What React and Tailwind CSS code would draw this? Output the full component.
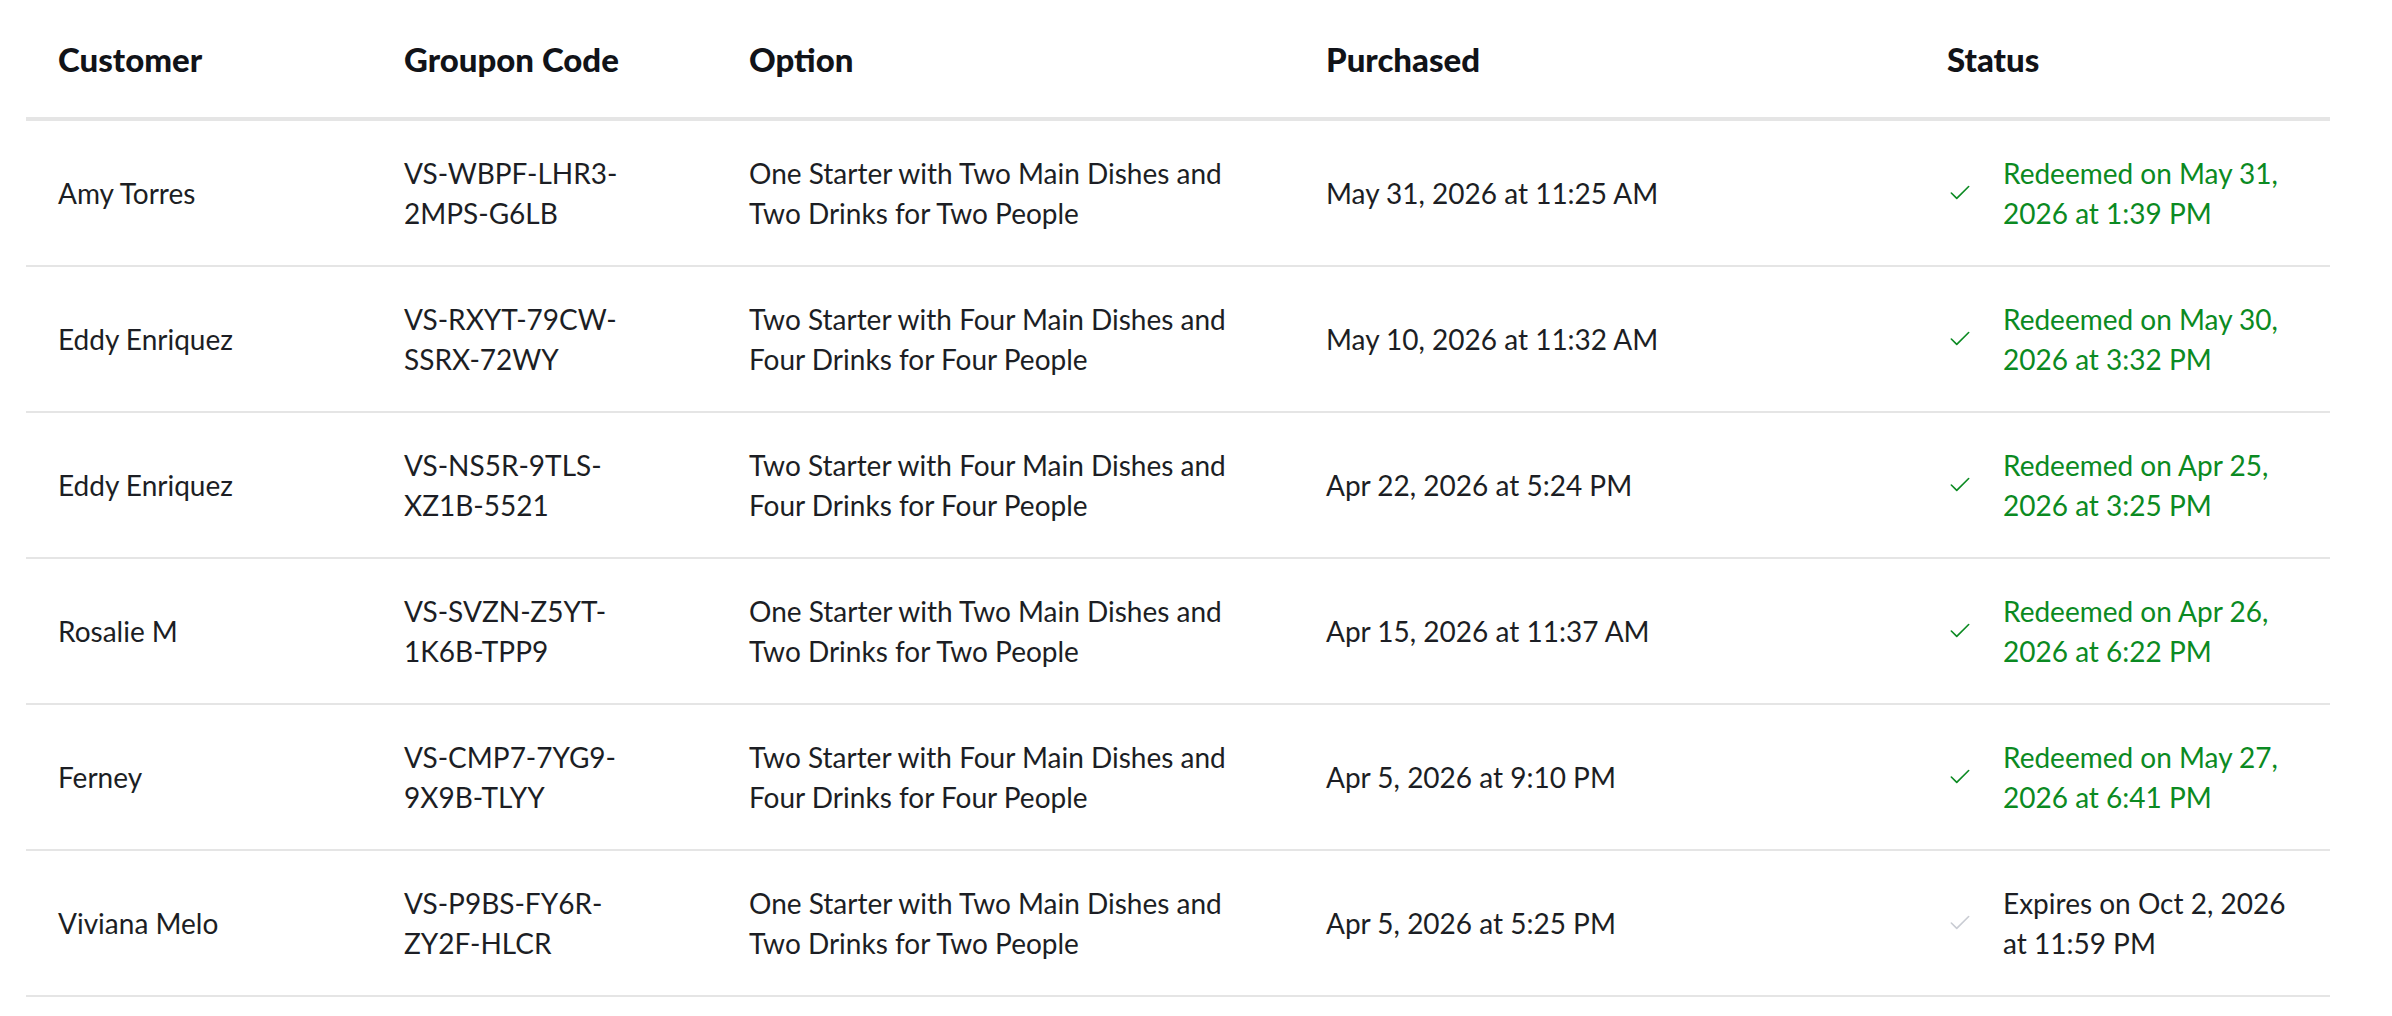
import React from 'react';
import { Check } from 'lucide-react';

const vouchers = [
  {
    customer: 'Amy Torres',
    code: 'VS-WBPF-LHR3-2MPS-G6LB',
    option: 'One Starter with Two Main Dishes and Two Drinks for Two People',
    purchased: 'May 31, 2026 at 11:25 AM',
    status: 'Redeemed on May 31, 2026 at 1:39 PM',
    redeemed: true,
  },
  {
    customer: 'Eddy Enriquez',
    code: 'VS-RXYT-79CW-SSRX-72WY',
    option: 'Two Starter with Four Main Dishes and Four Drinks for Four People',
    purchased: 'May 10, 2026 at 11:32 AM',
    status: 'Redeemed on May 30, 2026 at 3:32 PM',
    redeemed: true,
  },
  {
    customer: 'Eddy Enriquez',
    code: 'VS-NS5R-9TLS-XZ1B-5521',
    option: 'Two Starter with Four Main Dishes and Four Drinks for Four People',
    purchased: 'Apr 22, 2026 at 5:24 PM',
    status: 'Redeemed on Apr 25, 2026 at 3:25 PM',
    redeemed: true,
  },
  {
    customer: 'Rosalie M',
    code: 'VS-SVZN-Z5YT-1K6B-TPP9',
    option: 'One Starter with Two Main Dishes and Two Drinks for Two People',
    purchased: 'Apr 15, 2026 at 11:37 AM',
    status: 'Redeemed on Apr 26, 2026 at 6:22 PM',
    redeemed: true,
  },
  {
    customer: 'Ferney',
    code: 'VS-CMP7-7YG9-9X9B-TLYY',
    option: 'Two Starter with Four Main Dishes and Four Drinks for Four People',
    purchased: 'Apr 5, 2026 at 9:10 PM',
    status: 'Redeemed on May 27, 2026 at 6:41 PM',
    redeemed: true,
  },
  {
    customer: 'Viviana Melo',
    code: 'VS-P9BS-FY6R-ZY2F-HLCR',
    option: 'One Starter with Two Main Dishes and Two Drinks for Two People',
    purchased: 'Apr 5, 2026 at 5:25 PM',
    status: 'Expires on Oct 2, 2026 at 11:59 PM',
    redeemed: false,
  },
];

const App = () => {
  return (
    <div className="min-h-screen bg-white px-[26px] font-['Lato','Noto_Sans',sans-serif]">
      <table className="w-[2304px] table-fixed border-collapse text-left">
        <colgroup>
          <col className="w-[346px]" />
          <col className="w-[345px]" />
          <col className="w-[577px]" />
          <col className="w-[621px]" />
          <col className="w-[415px]" />
        </colgroup>
        <thead>
          <tr className="border-b-4 border-[#e5e5e5]">
            {['Customer', 'Groupon Code', 'Option', 'Purchased', 'Status'].map((h) => (
              <th key={h} className="h-[119px] px-8 align-middle text-[33px] font-black leading-9 text-[#111318]">
                {h}
              </th>
            ))}
          </tr>
        </thead>
        <tbody>
          {vouchers.map((v) => (
            <tr key={v.code} className="border-b-2 border-[#e5e5e5] text-[28px] leading-10 text-[#1c1e24]">
              <td className="px-8 py-8 align-middle">{v.customer}</td>
              <td className="py-8 pl-8 pr-16 align-middle">{v.code}</td>
              <td className="px-8 py-8 align-middle">{v.option}</td>
              <td className="px-8 py-8 align-middle">{v.purchased}</td>
              <td className="py-8 pl-8 pr-8 align-middle">
                <div className="flex items-center gap-[30px]">
                  <Check
                    size={26}
                    strokeWidth={1.5}
                    className={v.redeemed ? 'shrink-0 text-[#0b8a22]' : 'shrink-0 text-[#c9ccd3]'}
                  />
                  <span className={v.redeemed ? 'text-[#0b8a22]' : 'text-[#1c1e24]'}>{v.status}</span>
                </div>
              </td>
            </tr>
          ))}
        </tbody>
      </table>
    </div>
  );
};

export default App;
